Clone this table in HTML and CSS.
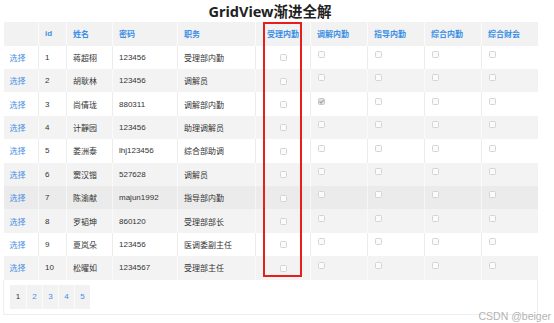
FILE: index.html
```html
<!DOCTYPE html>
<html lang="zh">
<head>
<meta charset="utf-8">
<title>GridView渐进全解</title>
<link rel="stylesheet" href="styles.css">
</head>
<body>
<div class="wrap">
  <h1 class="title">GridView渐进全解</h1>
  <table class="grid">
    <colgroup>
      <col class="c-sel"><col class="c-id"><col class="c-name"><col class="c-pwd"><col class="c-job">
      <col class="c-cb1"><col class="c-cb"><col class="c-cb"><col class="c-cb"><col class="c-cb5">
    </colgroup>
    <thead>
      <tr class="head">
        <th></th><th>id</th><th>姓名</th><th>密码</th><th>职务</th>
        <th class="center">受理内勤</th><th>调解内勤</th><th>指导内勤</th><th>综合内勤</th><th>综合财会</th>
      </tr>
    </thead>
    <tbody>
      <tr><td><a class="link">选择</a></td><td>1</td><td>蒋超栩</td><td>123456</td><td>受理部内勤</td><td class="center"><span class="cb"></span></td><td class="top"><span class="cb"></span></td><td class="top"><span class="cb"></span></td><td class="top"><span class="cb"></span></td><td class="top"><span class="cb"></span></td></tr>
      <tr class="alt"><td><a class="link">选择</a></td><td>2</td><td>胡耿林</td><td>123456</td><td>调解员</td><td class="center"><span class="cb"></span></td><td class="top"><span class="cb"></span></td><td class="top"><span class="cb"></span></td><td class="top"><span class="cb"></span></td><td class="top"><span class="cb"></span></td></tr>
      <tr><td><a class="link">选择</a></td><td>3</td><td>尚倩珑</td><td>880311</td><td>调解部内勤</td><td class="center"><span class="cb"></span></td><td class="top"><span class="cb checked"><svg viewBox="0 0 7 7" width="7" height="7"><path d="M1.5 3.6 L3 5 L5.6 2" fill="none" stroke="#9a9a9a" stroke-width="1.1"/></svg></span></td><td class="top"><span class="cb"></span></td><td class="top"><span class="cb"></span></td><td class="top"><span class="cb"></span></td></tr>
      <tr class="alt"><td><a class="link">选择</a></td><td>4</td><td>计靜园</td><td>123456</td><td>助理调解员</td><td class="center"><span class="cb"></span></td><td class="top"><span class="cb"></span></td><td class="top"><span class="cb"></span></td><td class="top"><span class="cb"></span></td><td class="top"><span class="cb"></span></td></tr>
      <tr><td><a class="link">选择</a></td><td>5</td><td>娄洲泰</td><td>lhj123456</td><td>综合部助调</td><td class="center"><span class="cb"></span></td><td class="top"><span class="cb"></span></td><td class="top"><span class="cb"></span></td><td class="top"><span class="cb"></span></td><td class="top"><span class="cb"></span></td></tr>
      <tr class="alt"><td><a class="link">选择</a></td><td>6</td><td>窦汉锴</td><td>527628</td><td>调解员</td><td class="center"><span class="cb"></span></td><td class="top"><span class="cb"></span></td><td class="top"><span class="cb"></span></td><td class="top"><span class="cb"></span></td><td class="top"><span class="cb"></span></td></tr>
      <tr class="hover"><td><a class="link">选择</a></td><td>7</td><td>陈渝献</td><td>majun1992</td><td>指导部内勤</td><td class="center"><span class="cb"></span></td><td class="top"><span class="cb"></span></td><td class="top"><span class="cb"></span></td><td class="top"><span class="cb"></span></td><td class="top"><span class="cb"></span></td></tr>
      <tr class="alt"><td><a class="link">选择</a></td><td>8</td><td>罗韬坤</td><td>860120</td><td>受理部部长</td><td class="center"><span class="cb"></span></td><td class="top"><span class="cb"></span></td><td class="top"><span class="cb"></span></td><td class="top"><span class="cb"></span></td><td class="top"><span class="cb"></span></td></tr>
      <tr><td><a class="link">选择</a></td><td>9</td><td>夏岚朵</td><td>123456</td><td>医调委副主任</td><td class="center"><span class="cb"></span></td><td class="top"><span class="cb"></span></td><td class="top"><span class="cb"></span></td><td class="top"><span class="cb"></span></td><td class="top"><span class="cb"></span></td></tr>
      <tr class="alt"><td><a class="link">选择</a></td><td>10</td><td>松曜如</td><td>1234567</td><td>受理部主任</td><td class="center"><span class="cb"></span></td><td class="top"><span class="cb"></span></td><td class="top"><span class="cb"></span></td><td class="top"><span class="cb"></span></td><td class="top"><span class="cb"></span></td></tr>
      <tr class="pager-row">
        <td colspan="10">
          <div class="pager">
            <span class="pg current">1</span><a class="pg">2</a><a class="pg">3</a><a class="pg">4</a><a class="pg">5</a>
          </div>
        </td>
      </tr>
    </tbody>
  </table>
</div>
<div class="highlight"></div>
<div class="watermark">CSDN @beiger</div>
</body>
</html>
```

FILE: styles.css
```css
html, body {
  margin: 0;
  padding: 0;
  background: #ffffff;
}
body {
  width: 554px;
  height: 323px;
  overflow: hidden;
  position: relative;
  font-family: "Liberation Sans", "Noto Sans CJK SC", sans-serif;
  color: #333333;
}
.wrap {
  margin-left: 3px;
  width: 534px;
}
.title {
  margin: 0;
  height: 22px;
  line-height: 22px;
  text-align: center;
  font-family: "Noto Sans", "Noto Sans CJK SC", sans-serif;
  font-size: 14.5px;
  font-weight: 700;
  color: #222222;
}
.grid {
  width: 534px;
  table-layout: fixed;
  border-collapse: collapse;
  font-size: 8px;
}
.c-sel { width: 35px; }
.c-id { width: 28px; }
.c-name { width: 46px; }
.c-pwd { width: 65px; }
.c-job { width: 78px; }
.c-cb1 { width: 55px; }
.c-cb { width: 57px; }
.c-cb5 { width: 56px; }
.grid tr { height: 23.4px; }
.grid tr.head { height: 23.7px; background: #f2f2f2; }
.grid th {
  text-align: left;
  padding: 0 0 0 6px;
  color: #3b8fe6;
  font-weight: 700;
  border-left: 1px solid #fbfbfb;
  white-space: nowrap;
}
.grid td {
  padding: 0 0 0 6px;
  border-left: 1px solid #ececec;
  white-space: nowrap;
  vertical-align: middle;
}
.grid th:first-child, .grid td:first-child { border-left: none; }
.grid tr.alt { background: #f3f3f3; }
.grid tr.alt td { border-left-color: #fafafa; }
.grid tr.hover { background: #ebebeb; }
.grid tr.hover td { border-left-color: #f6f6f6; }
.grid th.center, .grid td.center { text-align: center; padding: 0; }
.grid td.top { vertical-align: top; padding-top: 4px; padding-left: 7px; }
.link { color: #4a90e2; text-decoration: none; }
.cb {
  display: inline-block;
  box-sizing: border-box;
  width: 7px;
  height: 7px;
  border: 1px solid #d4d4d4;
  border-radius: 1.5px;
  background: #fbfbfb;
  vertical-align: middle;
  position: relative;
}
.cb.checked { background: #e2e2e2; border-color: #c8c8c8; }
.cb.checked svg { position: absolute; left: -1px; top: -1px; }
.grid tr.pager-row { height: 35px; background: #ffffff; }
.grid tr.pager-row td {
  padding: 5px 6px;
  border-left: 1px solid #eeeeee;
  border-right: 1px solid #eeeeee;
  border-bottom: 1px solid #eeeeee;
  vertical-align: middle;
}
.pager {
  display: flex;
  width: max-content;
  background: #f2f2f2;
}
.pg {
  width: 16px;
  height: 24px;
  line-height: 24px;
  text-align: center;
  font-size: 8px;
  color: #3b8fe6;
  border-left: 1px solid #fbfbfb;
  box-sizing: border-box;
}
.pg:first-child { border-left: none; }
.pg.current { color: #333333; }
.highlight {
  position: absolute;
  left: 263px;
  top: 22px;
  width: 39px;
  height: 255px;
  box-sizing: border-box;
  border: 2px solid #e5201c;
}
.watermark {
  position: absolute;
  right: 3px;
  top: 309px;
  font-family: "Liberation Sans", sans-serif;
  font-size: 10.5px;
  line-height: 14px;
  color: #b3b3b3;
}
```
